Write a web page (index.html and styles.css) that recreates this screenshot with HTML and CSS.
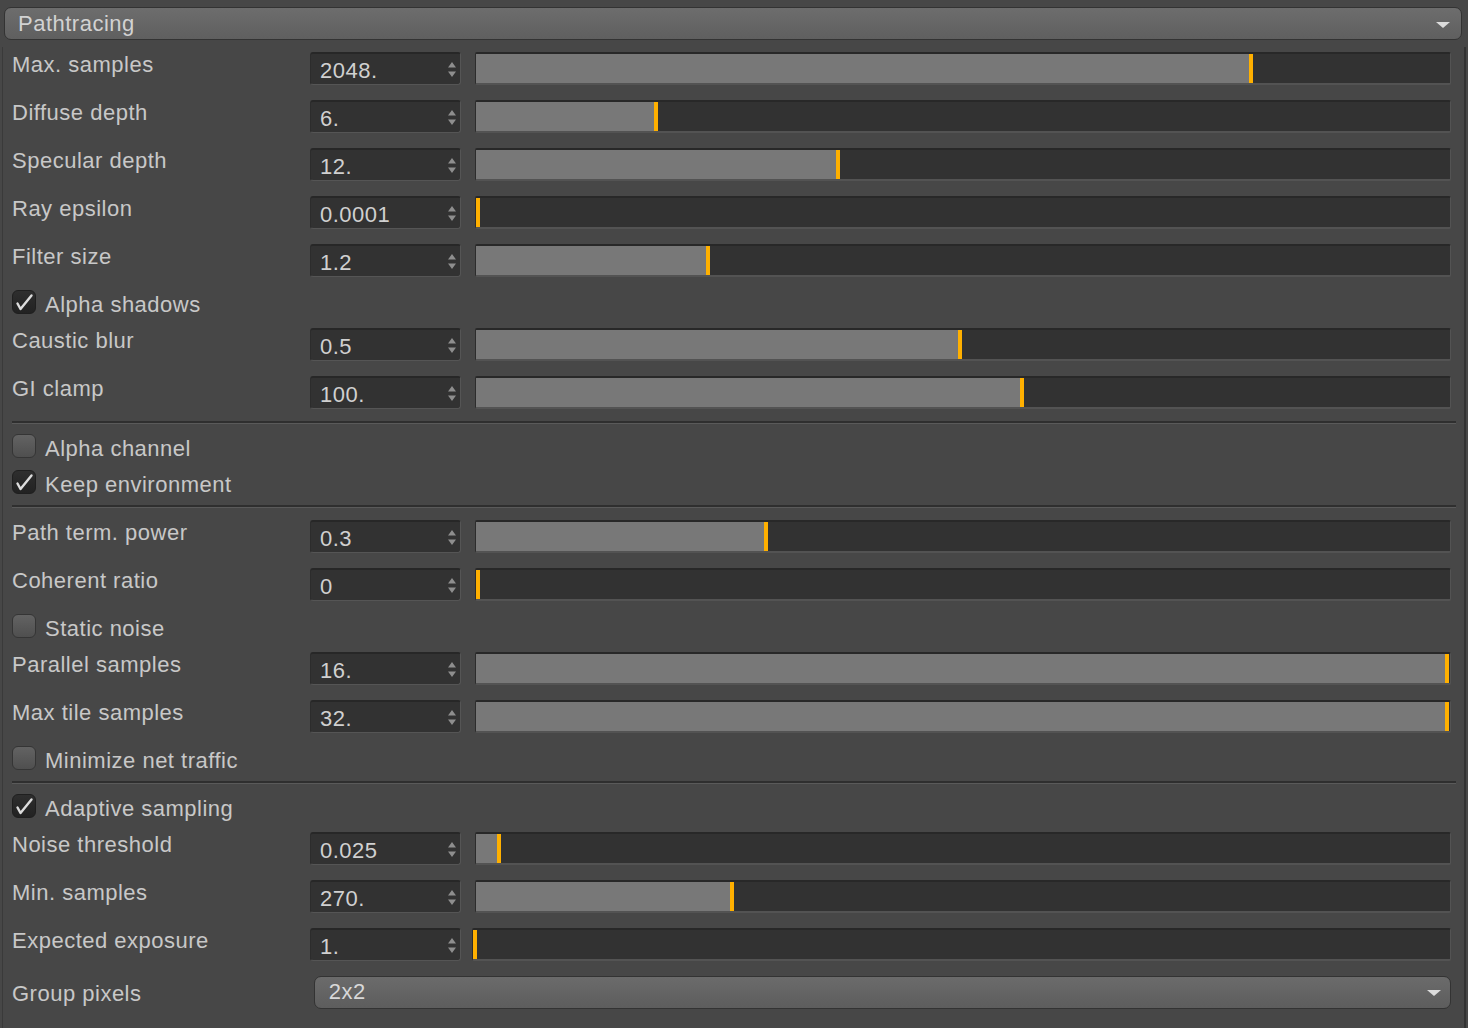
FILE: index.html
```html
<!DOCTYPE html>
<html>
<head>
<meta charset="utf-8">
<link rel="stylesheet" href="styles.css">
</head>
<body>
<div class="header">
  <span class="header-title">Pathtracing</span>
  <svg class="tri" width="16" height="8" viewBox="0 0 16 8"><path d="M1 1 L15 1 L8 7 Z" fill="#dcdcdc"/></svg>
</div>
<div class="panel">
  <div class="row slider-row"><div class="label">Max. samples</div><div class="spin"><span>2048.</span><svg class="arrows" width="10" height="17" viewBox="0 0 10 17"><path d="M5 1 L9 6.5 L1 6.5 Z M1 10.5 L9 10.5 L5 16 Z" fill="#8e8e8e"/></svg></div><div class="track"><div class="fill" style="width:777px"></div></div></div>
  <div class="row slider-row"><div class="label">Diffuse depth</div><div class="spin"><span>6.</span><svg class="arrows" width="10" height="17" viewBox="0 0 10 17"><path d="M5 1 L9 6.5 L1 6.5 Z M1 10.5 L9 10.5 L5 16 Z" fill="#8e8e8e"/></svg></div><div class="track"><div class="fill" style="width:182px"></div></div></div>
  <div class="row slider-row"><div class="label">Specular depth</div><div class="spin"><span>12.</span><svg class="arrows" width="10" height="17" viewBox="0 0 10 17"><path d="M5 1 L9 6.5 L1 6.5 Z M1 10.5 L9 10.5 L5 16 Z" fill="#8e8e8e"/></svg></div><div class="track"><div class="fill" style="width:364px"></div></div></div>
  <div class="row slider-row"><div class="label">Ray epsilon</div><div class="spin"><span>0.0001</span><svg class="arrows" width="10" height="17" viewBox="0 0 10 17"><path d="M5 1 L9 6.5 L1 6.5 Z M1 10.5 L9 10.5 L5 16 Z" fill="#8e8e8e"/></svg></div><div class="track"><div class="fill" style="width:3px"></div></div></div>
  <div class="row slider-row"><div class="label">Filter size</div><div class="spin"><span>1.2</span><svg class="arrows" width="10" height="17" viewBox="0 0 10 17"><path d="M5 1 L9 6.5 L1 6.5 Z M1 10.5 L9 10.5 L5 16 Z" fill="#8e8e8e"/></svg></div><div class="track"><div class="fill" style="width:234px"></div></div></div>
  <div class="row check-row"><div class="box checked"><svg width="24" height="24" viewBox="0 0 24 24"><path d="M5.5 13.5 L8.5 19 L19.5 5.5" fill="none" stroke="#dcdcdc" stroke-width="2.4" stroke-linecap="round" stroke-linejoin="round"/></svg></div><div class="label">Alpha shadows</div></div>
  <div class="row slider-row"><div class="label">Caustic blur</div><div class="spin"><span>0.5</span><svg class="arrows" width="10" height="17" viewBox="0 0 10 17"><path d="M5 1 L9 6.5 L1 6.5 Z M1 10.5 L9 10.5 L5 16 Z" fill="#8e8e8e"/></svg></div><div class="track"><div class="fill" style="width:486px"></div></div></div>
  <div class="row slider-row"><div class="label">GI clamp</div><div class="spin"><span>100.</span><svg class="arrows" width="10" height="17" viewBox="0 0 10 17"><path d="M5 1 L9 6.5 L1 6.5 Z M1 10.5 L9 10.5 L5 16 Z" fill="#8e8e8e"/></svg></div><div class="track"><div class="fill" style="width:548px"></div></div></div>
  <div class="sep"></div>
  <div class="row check-row"><div class="box"></div><div class="label">Alpha channel</div></div>
  <div class="row check-row"><div class="box checked"><svg width="24" height="24" viewBox="0 0 24 24"><path d="M5.5 13.5 L8.5 19 L19.5 5.5" fill="none" stroke="#dcdcdc" stroke-width="2.4" stroke-linecap="round" stroke-linejoin="round"/></svg></div><div class="label">Keep environment</div></div>
  <div class="sep"></div>
  <div class="row slider-row"><div class="label">Path term. power</div><div class="spin"><span>0.3</span><svg class="arrows" width="10" height="17" viewBox="0 0 10 17"><path d="M5 1 L9 6.5 L1 6.5 Z M1 10.5 L9 10.5 L5 16 Z" fill="#8e8e8e"/></svg></div><div class="track"><div class="fill" style="width:292px"></div></div></div>
  <div class="row slider-row"><div class="label">Coherent ratio</div><div class="spin"><span>0</span><svg class="arrows" width="10" height="17" viewBox="0 0 10 17"><path d="M5 1 L9 6.5 L1 6.5 Z M1 10.5 L9 10.5 L5 16 Z" fill="#8e8e8e"/></svg></div><div class="track"><div class="fill" style="width:3px"></div></div></div>
  <div class="row check-row"><div class="box"></div><div class="label">Static noise</div></div>
  <div class="row slider-row"><div class="label">Parallel samples</div><div class="spin"><span>16.</span><svg class="arrows" width="10" height="17" viewBox="0 0 10 17"><path d="M5 1 L9 6.5 L1 6.5 Z M1 10.5 L9 10.5 L5 16 Z" fill="#8e8e8e"/></svg></div><div class="track"><div class="fill" style="width:973px"></div></div></div>
  <div class="row slider-row"><div class="label">Max tile samples</div><div class="spin"><span>32.</span><svg class="arrows" width="10" height="17" viewBox="0 0 10 17"><path d="M5 1 L9 6.5 L1 6.5 Z M1 10.5 L9 10.5 L5 16 Z" fill="#8e8e8e"/></svg></div><div class="track"><div class="fill" style="width:973px"></div></div></div>
  <div class="row check-row"><div class="box"></div><div class="label">Minimize net traffic</div></div>
  <div class="sep"></div>
  <div class="row check-row"><div class="box checked"><svg width="24" height="24" viewBox="0 0 24 24"><path d="M5.5 13.5 L8.5 19 L19.5 5.5" fill="none" stroke="#dcdcdc" stroke-width="2.4" stroke-linecap="round" stroke-linejoin="round"/></svg></div><div class="label">Adaptive sampling</div></div>
  <div class="row slider-row"><div class="label">Noise threshold</div><div class="spin"><span>0.025</span><svg class="arrows" width="10" height="17" viewBox="0 0 10 17"><path d="M5 1 L9 6.5 L1 6.5 Z M1 10.5 L9 10.5 L5 16 Z" fill="#8e8e8e"/></svg></div><div class="track"><div class="fill" style="width:25px"></div></div></div>
  <div class="row slider-row"><div class="label">Min. samples</div><div class="spin"><span>270.</span><svg class="arrows" width="10" height="17" viewBox="0 0 10 17"><path d="M5 1 L9 6.5 L1 6.5 Z M1 10.5 L9 10.5 L5 16 Z" fill="#8e8e8e"/></svg></div><div class="track"><div class="fill" style="width:258px"></div></div></div>
  <div class="row slider-row"><div class="label">Expected exposure</div><div class="spin"><span>1.</span><svg class="arrows" width="10" height="17" viewBox="0 0 10 17"><path d="M5 1 L9 6.5 L1 6.5 Z M1 10.5 L9 10.5 L5 16 Z" fill="#8e8e8e"/></svg></div><div class="track track-left"><div class="fill" style="width:3px"></div></div></div>
  <div class="row drop-row"><div class="label">Group pixels</div><div class="drop"><span>2x2</span><svg class="tri" width="16" height="8" viewBox="0 0 16 8"><path d="M1 1 L15 1 L8 7 Z" fill="#dcdcdc"/></svg></div></div>
</div>
</body>
</html>
```
FILE: styles.css
```css
html, body {
  margin: 0;
  padding: 0;
  background: #474747;
  width: 1468px;
  height: 1028px;
  overflow: hidden;
  font-family: "Liberation Sans", Arial, sans-serif;
  font-size: 22px;
  letter-spacing: 0.5px;
  color: #c8c8c8;
}

.header {
  margin: 7px 6px 0 4px;
  height: 31px;
  border: 1px solid #333;
  border-radius: 7px;
  background: linear-gradient(#6d6d6d, #5f5f5f);
  display: flex;
  align-items: center;
  justify-content: space-between;
  padding: 0 10px 0 13px;
  box-sizing: content-box;
}

.header-title {
  color: #d2d2d2;
  line-height: 31px;
}

.header .tri {
  margin-top: 2px;
}

.panel {
  margin: 7px 2px 0 2px;
  border-left: 1px solid #3a3a3a;
  border-right: 2px solid #333;
  padding-left: 9px;
  padding-right: 13px;
  height: 990px;
}

.row {
  display: flex;
}

.label {
  line-height: 26px;
  white-space: nowrap;
}

.slider-row {
  height: 48px;
}

.slider-row .label {
  width: 298px;
  padding-top: 5px;
}

.spin {
  margin-top: 5px;
  width: 151px;
  height: 33px;
  box-sizing: border-box;
  background: #323232;
  border-top: 2px solid #272727;
  border-left: 1px solid #2c2c2c;
  border-right: 1px solid #555;
  border-bottom: 1px solid #555;
  border-radius: 3px;
  display: flex;
  align-items: center;
  justify-content: space-between;
  padding: 0 3px 0 9px;
  color: #d0d0d0;
}

.spin span {
  line-height: 28px;
  padding-top: 3px;
}

.track {
  margin-top: 5px;
  margin-left: 14px;
  width: 976px;
  height: 33px;
  box-sizing: border-box;
  background: #323232;
  border-top: 2px solid #282828;
  border-left: 1px solid #2c2c2c;
  border-right: 1px solid #535353;
  border-bottom: 2px solid #535353;
  border-radius: 2px;
}

.track-left {
  margin-left: 11px;
  width: 979px;
}

.fill {
  height: 100%;
  box-sizing: border-box;
  background: #787878;
  border-right: 4px solid #ffb000;
}

.check-row {
  height: 36px;
}

.check-row .label {
  padding-top: 5px;
}

.box {
  width: 24px;
  height: 24px;
  margin-top: 3px;
  margin-right: 9px;
  border-radius: 6px;
  box-sizing: border-box;
  border: 1px solid #353535;
  background: linear-gradient(#636363, #4f4f4f);
}

.box.checked {
  background: linear-gradient(#2e2e2e, #222);
  border-color: #1f1f1f;
}

.box svg {
  display: block;
  margin: -1px 0 0 -1px;
}

.sep {
  height: 12px;
  box-sizing: border-box;
  padding-top: 2px;
  margin-right: -5px;
}

.sep::before {
  content: "";
  display: block;
  height: 2px;
  background: #2f2f2f;
  border-bottom: 1px solid #5a5a5a;
}

.drop-row {
  height: 48px;
  align-items: center;
  padding-bottom: 6px;
  box-sizing: border-box;
}

.drop-row .label {
  width: 302px;
  padding-top: 3px;
}

.drop {
  width: 1138px;
  height: 33px;
  box-sizing: border-box;
  border: 1px solid #333;
  border-radius: 7px;
  background: linear-gradient(#6b6b6b, #5d5d5d);
  display: flex;
  align-items: center;
  justify-content: space-between;
  padding: 0 8px 0 14px;
  color: #d8d8d8;
}

.drop .tri {
  margin-top: 2px;
}
```
